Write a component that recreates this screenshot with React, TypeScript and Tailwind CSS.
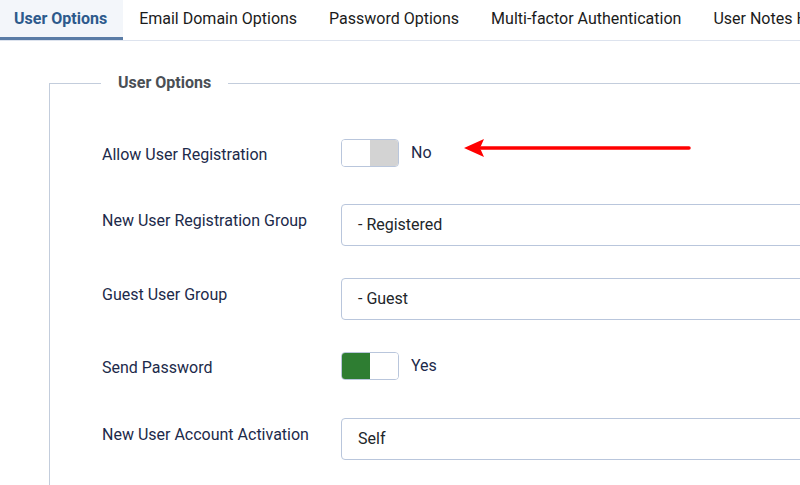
import React from 'react';

const TABS = ['User Options', 'Email Domain Options', 'Password Options', 'Multi-factor Authentication', 'User Notes History'];

function Toggle({ on }: { on: boolean }) {
  return (
    <div className="flex h-[28px] w-[58px] overflow-hidden rounded-[4px] border border-[#b9c6dc]">
      <div className={on ? 'flex-1 bg-[#2e7d32]' : 'flex-1 bg-white'} />
      <div className={on ? 'flex-1 bg-white' : 'flex-1 bg-[#d3d3d3]'} />
    </div>
  );
}

function Row({ label, children, tall, h }: { label: string; children: React.ReactNode; tall?: boolean; h?: string }) {
  return (
    <div className={tall ? 'flex' : `flex ${h ?? 'h-[33px]'}`}>
      <div className={tall
        ? 'w-[239px] shrink-0 pt-[5px] text-[16px] leading-6 text-[#1c2a4a]'
        : 'w-[239px] shrink-0 pt-[4px] text-[16px] leading-6 text-[#1c2a4a]'}>{label}</div>
      <div className="flex-1">{children}</div>
    </div>
  );
}

function SelectBox({ value }: { value: string }) {
  return (
    <div className="flex h-[42px] w-[520px] items-center rounded-[4px] border border-[#b9c6dc] bg-white px-4 text-[16px] text-[#22262a]">
      {value}
    </div>
  );
}

export default function App() {
  return (
    <div className="h-[485px] w-[800px] overflow-hidden bg-white font-['Roboto',sans-serif]">
      {/* tab bar */}
      <div className="flex h-[41px] whitespace-nowrap border-b border-[#dde3ee]">
        {TABS.map((t, i) => (
          <div key={t}
            className={i === 0
              ? 'flex h-[40px] items-center border-b-[3px] border-[#5a7ca6] bg-[#f3f6fa] pl-[14px] pr-4 text-[16px] font-bold text-[#2d5a8c]'
              : 'flex h-[40px] items-center px-4 pb-[3px] text-[16px] text-[#1b1b1b]'}>
            {t}
          </div>
        ))}
      </div>

      <div className="pl-[49px] pt-[30px]">
        <fieldset className="min-h-[460px] w-[800px] border border-b-0 border-r-0 border-[#c3cddc] pl-[52px] pt-[44px]">
          <legend className="ml-[-1px] px-[17px] text-[16px] font-bold text-[#4a4f55]">User Options</legend>

          <div className="flex flex-col gap-8">
            <Row label="Allow User Registration">
              <div className="relative flex items-center gap-[12px]">
                <Toggle on={false} />
                <span className="text-[16px] text-[#1c2a4a]">No</span>
                <svg className="absolute left-[122px] top-[-1px]" width="230" height="20" viewBox="0 0 230 20">
                  <line x1="18" y1="10" x2="226" y2="10" stroke="#ff0000" strokeWidth="3.5" strokeLinecap="round" />
                  <path d="M1 10 L21 1 L17 10 L21 19 Z" fill="#ff0000" />
                </svg>
              </div>
            </Row>
            <Row label="New User Registration Group" tall>
              <SelectBox value="- Registered" />
            </Row>
            <Row label="Guest User Group" tall>
              <SelectBox value="- Guest" />
            </Row>
            <Row label="Send Password" h="h-[34px]">
              <div className="flex items-center gap-[12px]">
                <Toggle on />
                <span className="text-[16px] text-[#1c2a4a]">Yes</span>
              </div>
            </Row>
            <Row label="New User Account Activation" tall>
              <SelectBox value="Self" />
            </Row>
          </div>
        </fieldset>
      </div>
    </div>
  );
}
